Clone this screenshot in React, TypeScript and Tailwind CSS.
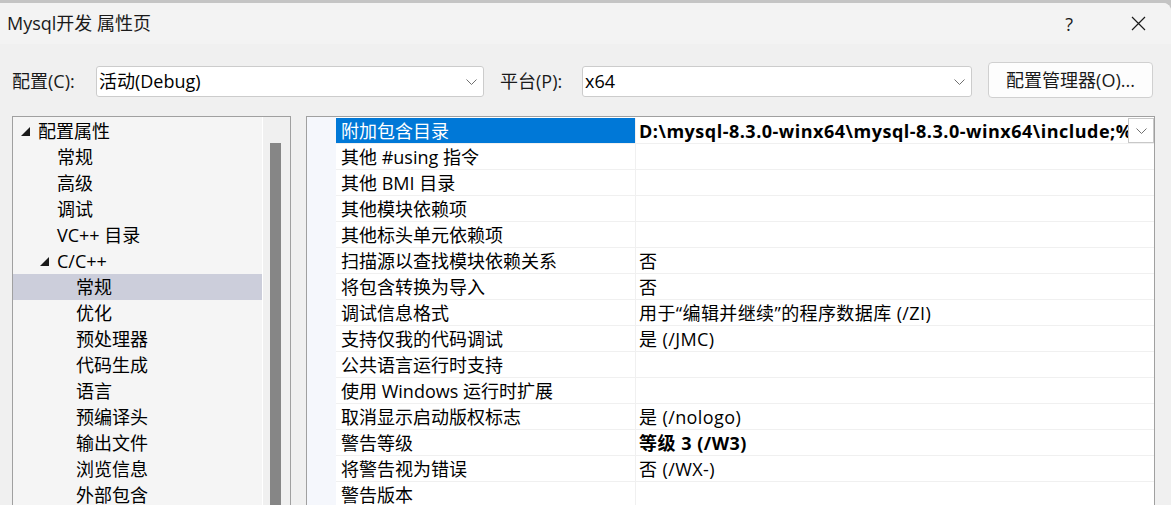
import React from 'react';

interface TreeItem {
  label: string;
  level: number;
  expanded?: boolean;
  selected?: boolean;
}

interface PropRow {
  name: string;
  value?: string;
  bold?: boolean;
  selected?: boolean;
  dropdown?: boolean;
}

const treeItems: TreeItem[] = [
  { label: '配置属性', level: 0, expanded: true },
  { label: '常规', level: 1 },
  { label: '高级', level: 1 },
  { label: '调试', level: 1 },
  { label: 'VC++ 目录', level: 1 },
  { label: 'C/C++', level: 1, expanded: true },
  { label: '常规', level: 2, selected: true },
  { label: '优化', level: 2 },
  { label: '预处理器', level: 2 },
  { label: '代码生成', level: 2 },
  { label: '语言', level: 2 },
  { label: '预编译头', level: 2 },
  { label: '输出文件', level: 2 },
  { label: '浏览信息', level: 2 },
  { label: '外部包含', level: 2 },
];

const propRows: PropRow[] = [
  {
    name: '附加包含目录',
    value: 'D:\\mysql-8.3.0-winx64\\mysql-8.3.0-winx64\\include;%(AdditionalIncludeDirectories)',
    bold: true,
    selected: true,
    dropdown: true,
  },
  { name: '其他 #using 指令' },
  { name: '其他 BMI 目录' },
  { name: '其他模块依赖项' },
  { name: '其他标头单元依赖项' },
  { name: '扫描源以查找模块依赖关系', value: '否' },
  { name: '将包含转换为导入', value: '否' },
  { name: '调试信息格式', value: '用于“编辑并继续”的程序数据库 (/ZI)' },
  { name: '支持仅我的代码调试', value: '是 (/JMC)' },
  { name: '公共语言运行时支持' },
  { name: '使用 Windows 运行时扩展' },
  { name: '取消显示启动版权标志', value: '是 (/nologo)' },
  { name: '警告等级', value: '等级 3 (/W3)', bold: true },
  { name: '将警告视为错误', value: '否 (/WX-)' },
  { name: '警告版本' },
];

const Chevron = () => (
  <svg width="11" height="6" viewBox="0 0 11 6" className="shrink-0">
    <path d="M0.5 0.5 L5.5 5.5 L10.5 0.5" fill="none" stroke="#707070" strokeWidth="1" />
  </svg>
);

const Expander = () => (
  <svg width="9" height="9" viewBox="0 0 9 9" className="shrink-0">
    <polygon points="9,0 9,9 0,9" fill="#1a1a1a" />
  </svg>
);

const Combo = ({ value, width }: { value: string; width: string }) => (
  <div
    className={`${width} h-[31px] mt-[4px] bg-white border border-[#cccccc] rounded-[3px] flex items-center pl-[2px] pr-[6px]`}
  >
    <span className="flex-1 text-[18px] text-black whitespace-nowrap">{value}</span>
    <Chevron />
  </div>
);

export default function App() {
  return (
    <div className="w-[1171px] h-[505px] overflow-hidden bg-[#c4c4c4] font-['Open_Sans','Noto_Sans_CJK_SC',sans-serif]">
      <div className="h-[3px]" />
      <div className="h-[502px] bg-[#f0f0f0] rounded-tr-[8px] overflow-hidden flex flex-col">
        {/* title bar */}
        <div className="h-[41px] shrink-0 bg-[#f3f3f3] flex items-center pl-[7px] pr-[25px]">
          <span className="text-[18px] text-[#1a1a1a] whitespace-nowrap">Mysql开发 属性页</span>
          <div className="ml-auto flex items-center gap-[58px]">
            <span className="text-[18px] text-[#1a1a1a] leading-none">?</span>
            <svg width="15" height="15" viewBox="0 0 15 15">
              <path d="M1 1 L14 14 M14 1 L1 14" stroke="#1a1a1a" strokeWidth="1.2" />
            </svg>
          </div>
        </div>

        {/* config row */}
        <div className="h-[36px] mt-[18px] shrink-0 flex items-start pl-[12px]">
          <span className="w-[84px] h-[36px] flex items-center pt-[3px] text-[18px] text-[#1a1a1a] whitespace-nowrap">
            配置(C):
          </span>
          <Combo value="活动(Debug)" width="w-[388px]" />
          <span className="w-[82px] ml-[16px] h-[36px] flex items-center pt-[3px] text-[18px] text-[#1a1a1a] whitespace-nowrap">
            平台(P):
          </span>
          <Combo value="x64" width="w-[390px]" />
          <button className="w-[165px] h-[36px] ml-[16px] bg-[#fdfdfd] border border-[#d0d0d0] rounded-[4px] text-[18px] text-[#1a1a1a] whitespace-nowrap">
            配置管理器(O)...
          </button>
        </div>

        {/* panels */}
        <div className="mt-[18px] flex gap-[15px] pl-[12px]">
          {/* tree */}
          <div className="w-[279px] h-[400px] shrink-0 border border-[#a0a0a0] bg-[#f5f5f5] flex overflow-hidden">
            <div className="w-[250px] pt-[1px] border-r border-white">
              {treeItems.map((item, i) => (
                <div
                  key={i}
                  className={`h-[26px] flex items-center ${item.selected ? 'bg-[#cccedb]' : ''}`}
                  style={{ paddingLeft: 25 + item.level * 19 }}
                >
                  <div className="w-0 relative">
                    {item.expanded && (
                      <div className="absolute -left-[17px] -top-[4px]">
                        <Expander />
                      </div>
                    )}
                  </div>
                  <span className="text-[18px] text-black whitespace-nowrap">{item.label}</span>
                </div>
              ))}
            </div>
            <div className="flex-1 bg-[#f0f0f0] pt-[26px] pl-[7px]">
              <div className="w-[11px] h-[400px] bg-[#868686]" />
            </div>
          </div>

          {/* property grid */}
          <div className="w-[849px] h-[400px] shrink-0 border border-[#a0a0a0] bg-white flex overflow-hidden">
            <div className="w-[29px] shrink-0 bg-[#f5f7fc]" />
            <div className="flex-1 min-w-0 pt-[1px]">
              {propRows.map((row, i) => (
                <div key={i} className="h-[26px] flex border-b border-[#f0f0f0]">
                  <div
                    className={`w-[299px] shrink-0 flex items-center pl-[5px] pt-[1px] text-[18px] whitespace-nowrap overflow-hidden ${
                      row.selected ? 'bg-[#0078d7] text-white' : 'text-black'
                    }`}
                  >
                    {row.name}
                  </div>
                  <div className="w-px shrink-0 bg-[#f0f0f0]" />
                  <div className="flex-1 min-w-0 flex items-center">
                    <span
                      className={`flex-1 min-w-0 overflow-hidden whitespace-nowrap pl-[3px] pt-[1px] text-[18px] text-black ${
                        row.bold ? 'font-bold tracking-[0.5px]' : 'tracking-[0.4px]'
                      }`}
                    >
                      {row.value}
                    </span>
                    {row.dropdown && (
                      <div className="w-[26px] h-[25px] shrink-0 bg-white border border-[#c8c8c8] flex items-center justify-center">
                        <Chevron />
                      </div>
                    )}
                  </div>
                </div>
              ))}
            </div>
          </div>
        </div>
      </div>
    </div>
  );
}
